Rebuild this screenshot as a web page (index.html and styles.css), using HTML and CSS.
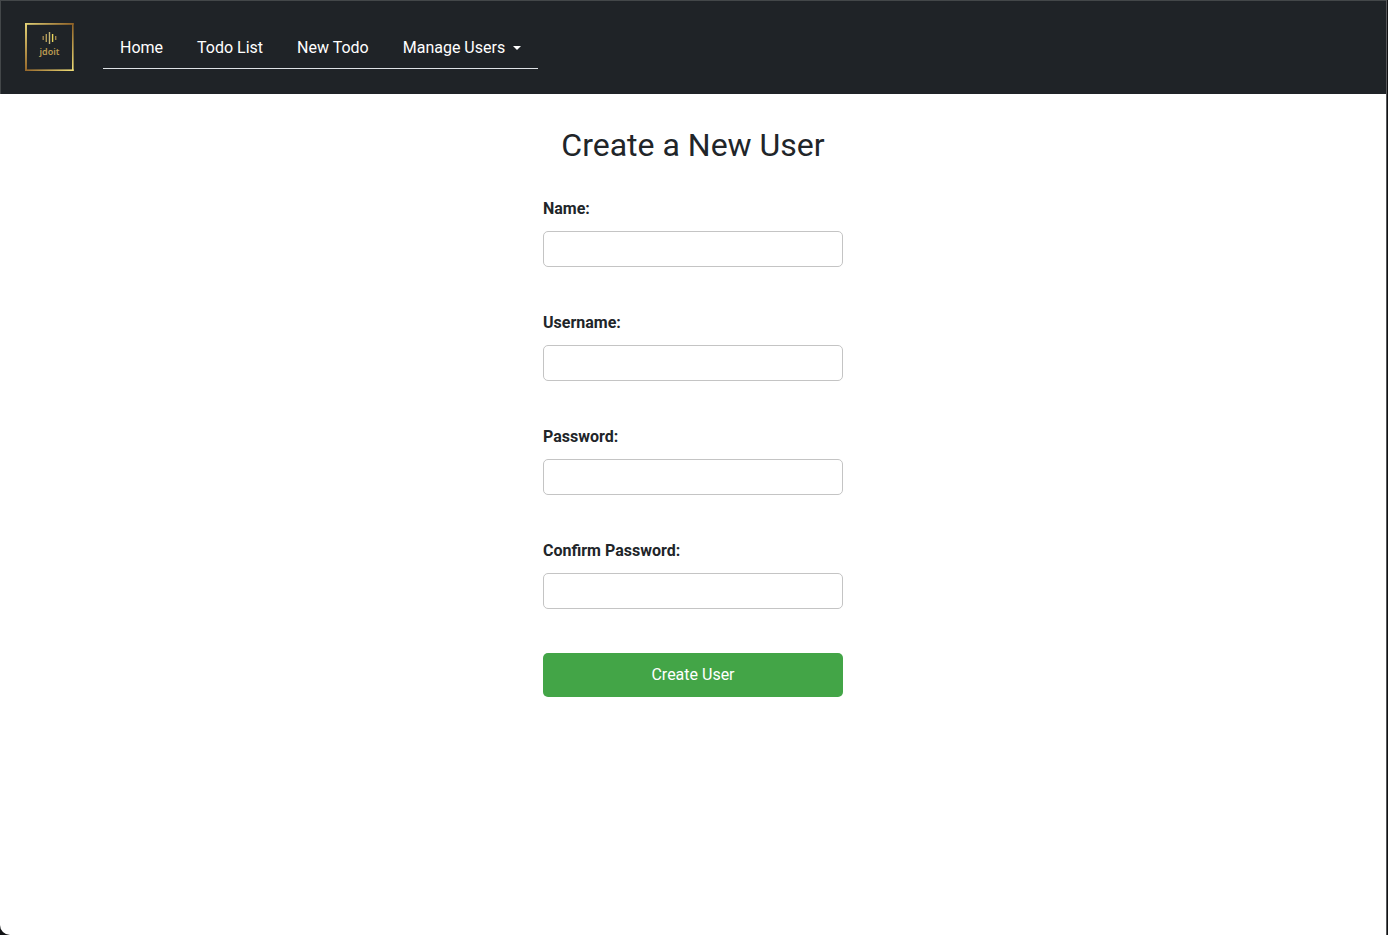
FILE: index.html
```html
<!DOCTYPE html>
<html lang="en">
<head>
<meta charset="utf-8">
<meta name="viewport" content="width=device-width, initial-scale=1">
<title>jdoit - Create a New User</title>
<link rel="stylesheet" href="styles.css">
</head>
<body>
<div class="window">
  <header class="site-header">
    <a class="brand" href="#" aria-label="jdoit">
      <svg class="brand-logo" viewBox="0 0 49 49" width="49" height="49">
        <defs>
          <linearGradient id="frame-top" x1="0" y1="0" x2="1" y2="0">
            <stop offset="0" stop-color="#e2d277"/>
            <stop offset="1" stop-color="#8f6126"/>
          </linearGradient>
          <linearGradient id="frame-bottom" x1="0" y1="0" x2="1" y2="0">
            <stop offset="0" stop-color="#94662a"/>
            <stop offset="1" stop-color="#f0df78"/>
          </linearGradient>
          <linearGradient id="frame-left" x1="0" y1="0" x2="0" y2="1">
            <stop offset="0" stop-color="#e2d277"/>
            <stop offset="1" stop-color="#94662a"/>
          </linearGradient>
          <linearGradient id="frame-right" x1="0" y1="0" x2="0" y2="1">
            <stop offset="0" stop-color="#8f6126"/>
            <stop offset="1" stop-color="#f0df78"/>
          </linearGradient>
        </defs>
        <rect x="0" y="0" width="2" height="48" fill="url(#frame-left)"/>
        <rect x="47" y="0" width="1.6" height="48" fill="url(#frame-right)"/>
        <rect x="0" y="0" width="48.6" height="1.8" fill="url(#frame-top)"/>
        <rect x="0" y="46.4" width="48.6" height="1.6" fill="url(#frame-bottom)"/>
        <g stroke-width="1.4">
          <path d="M18.2 13v4" stroke="#a08650"/>
          <path d="M21.3 11v8" stroke="#b39b58"/>
          <path d="M24.5 9v12" stroke="#c4b477"/>
          <path d="M27.6 11v8" stroke="#ead75c"/>
          <path d="M30.7 13v4" stroke="#a08650"/>
        </g>
        <text class="brand-text" x="24.5" y="32" text-anchor="middle">jdoit</text>
      </svg>
    </a>
    <nav class="main-nav" aria-label="Main">
      <a class="nav-link" href="#">Home</a>
      <a class="nav-link" href="#">Todo List</a>
      <a class="nav-link" href="#">New Todo</a>
      <button class="nav-link nav-toggle" type="button" aria-haspopup="true" aria-expanded="false">Manage Users<span class="caret"></span></button>
    </nav>
  </header>
  <main class="content">
    <h1 class="page-title">Create a New User</h1>
    <form class="user-form">
      <div class="field">
        <label class="field-label" for="name">Name:</label>
        <input class="field-input" id="name" type="text">
      </div>
      <div class="field">
        <label class="field-label" for="username">Username:</label>
        <input class="field-input" id="username" type="text">
      </div>
      <div class="field">
        <label class="field-label" for="password">Password:</label>
        <input class="field-input" id="password" type="password">
      </div>
      <div class="field">
        <label class="field-label" for="confirm">Confirm Password:</label>
        <input class="field-input" id="confirm" type="password">
      </div>
      <button class="submit" type="submit">Create User</button>
    </form>
  </main>
</div>
</body>
</html>
```
FILE: styles.css
```css
*,
*::before,
*::after {
  box-sizing: border-box;
}

body {
  margin: 0;
  padding-right: 1px;
  background: #111214;
  color: #212529;
  font-family: Roboto, sans-serif;
  font-size: 16px;
  line-height: 24px;
}

.window {
  min-height: 100vh;
  border-right: 1px solid #58595b;
  border-bottom-left-radius: 10px;
  background: #fff;
}

.site-header {
  display: flex;
  align-items: center;
  gap: 29px;
  padding: 22px 24px;
  border-top: 1px solid #434749;
  border-left: 1px solid #434749;
  background: #1f2327;
}

.brand,
.brand-logo {
  display: block;
}

.brand-text {
  fill: #bb9a50;
  font: 600 9px "Noto Sans", sans-serif;
}

.main-nav {
  display: flex;
  border-bottom: 1px solid #dee2e6;
}

.nav-link {
  padding: 10px 17px 8px;
  border: 0;
  background: none;
  color: #fff;
  font: 400 16px/24px Roboto, sans-serif;
  text-decoration: none;
}

.nav-toggle {
  display: flex;
  align-items: center;
  gap: 8px;
  cursor: pointer;
}

.caret {
  border-top: 4px solid #fff;
  border-right: 4px solid transparent;
  border-left: 4px solid transparent;
}

.content {
  display: flex;
  flex-direction: column;
  align-items: center;
  padding: 32px 16px;
}

.page-title {
  margin: 0 0 33px;
  font-size: 32px;
  font-weight: 400;
  line-height: 38px;
}

.user-form {
  display: flex;
  flex-direction: column;
  gap: 44px;
  width: 100%;
  max-width: 300px;
}

.field {
  display: flex;
  flex-direction: column;
  gap: 10px;
}

.field-label {
  font-weight: 700;
}

.field-input {
  width: 100%;
  height: 36px;
  padding: 4px 12px;
  border: 1px solid #c4c4c4;
  border-radius: 5px;
  background: #fff;
  color: inherit;
  font: inherit;
}

.submit {
  padding: 10px 16px;
  border: 0;
  border-radius: 5px;
  background: #43a547;
  color: #fff;
  font: 400 16px/24px Roboto, sans-serif;
  cursor: pointer;
}
```
